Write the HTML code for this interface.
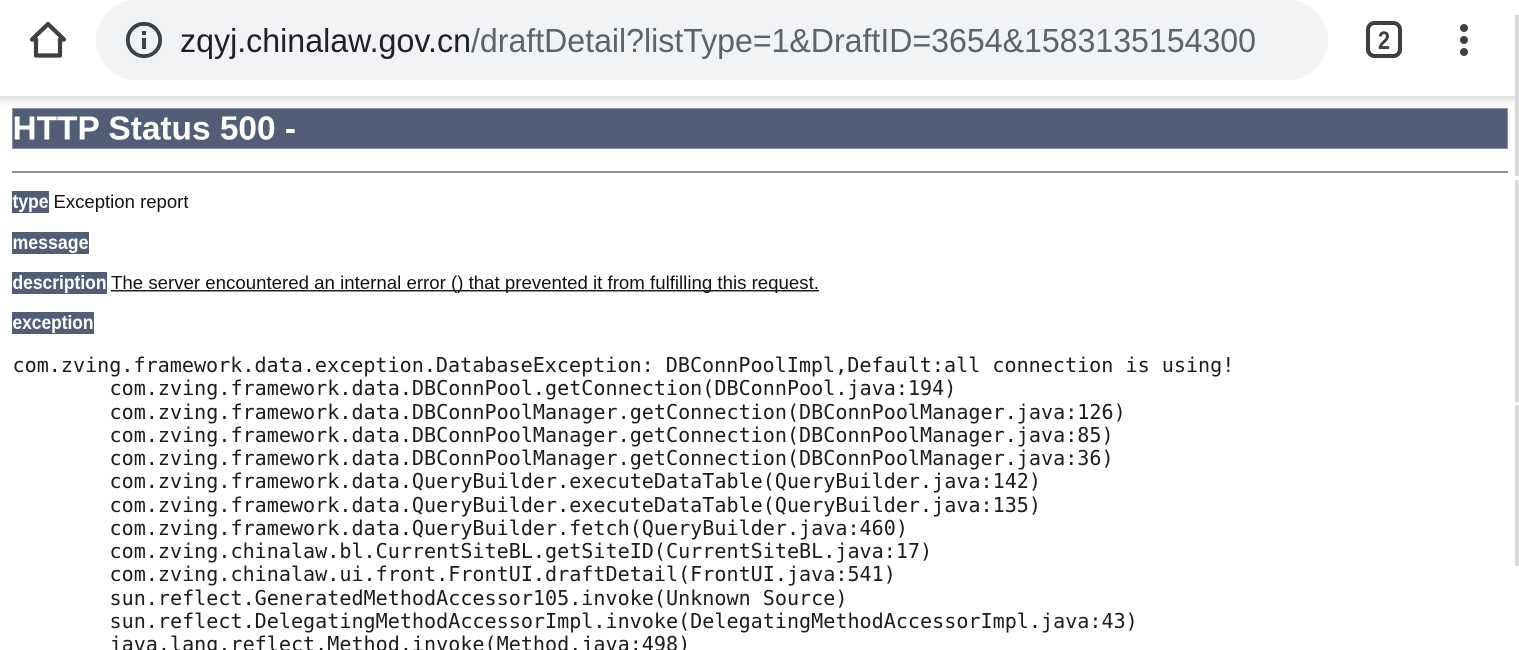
<!DOCTYPE html>
<html><head><meta charset="utf-8"><title>HTTP Status 500</title>
<style>
html,body{margin:0;padding:0;width:1519px;height:650px;overflow:hidden;background:#fff}
svg{display:block}
.s{font-family:"Liberation Sans",Arial,sans-serif}
.m{font-family:"DejaVu Sans Mono","Liberation Mono",monospace;font-size:20.1px;fill:#1c1c1c;white-space:pre}
.b{font-weight:700;fill:#fff;font-size:19.5px}
.t{font-size:18.5px;fill:#111}
</style></head><body>
<svg width="1519" height="650" viewBox="0 0 1519 650" xmlns="http://www.w3.org/2000/svg">
<defs><linearGradient id="sh" x1="0" y1="0" x2="0" y2="1"><stop offset="0" stop-color="#e2e2e2"/><stop offset="1" stop-color="#fff"/></linearGradient></defs>
<rect x="0" y="96" width="1519" height="10" fill="url(#sh)"/>
<!-- toolbar -->
<rect x="96" y="0" width="1232" height="80" rx="40" fill="#f1f3f4"/>
<path d="M48 24 L32 39.5 H36 V55.5 H60 V39.5 H64 Z" fill="none" stroke="#3c4043" stroke-width="4.2" stroke-linejoin="round"/>
<circle cx="144" cy="40" r="16.2" fill="none" stroke="#3c4043" stroke-width="3.8"/>
<rect x="142" y="31" width="4" height="4" fill="#3c4043"/><rect x="142" y="38" width="4" height="11" fill="#3c4043"/>
<text class="s" x="180" y="52" font-size="33.5" fill="#202124" textLength="291" lengthAdjust="spacingAndGlyphs">zqyj.chinalaw.gov.cn</text>
<text class="s" x="471" y="52" font-size="33.5" fill="#5f6368" textLength="785" lengthAdjust="spacingAndGlyphs">/draftDetail?listType=1&amp;DraftID=3654&amp;1583135154300</text>
<rect x="1368" y="23" width="32" height="33" rx="6.5" fill="none" stroke="#3c4043" stroke-width="4"/>
<text class="s" x="1384" y="49" font-size="25" font-weight="700" fill="#3c4043" text-anchor="middle" textLength="12" lengthAdjust="spacingAndGlyphs">2</text>
<circle cx="1464" cy="28" r="4" fill="#3c4043"/><circle cx="1464" cy="40" r="4" fill="#3c4043"/><circle cx="1464" cy="52" r="4" fill="#3c4043"/>
<!-- scrollbar -->
<rect x="1515" y="15" width="4" height="161" fill="#d9d9d9"/>
<rect x="1515" y="180" width="4" height="222" fill="#d9d9d9"/>
<rect x="1515" y="405" width="4" height="161" fill="#d9d9d9"/>
<!-- heading -->
<rect x="12.5" y="108.5" width="1495" height="40" fill="#525d76" stroke="#8a93a8" stroke-width="1"/>
<text class="s" x="12.5" y="139.5" font-size="33.5" font-weight="700" fill="#fff" textLength="283.5" lengthAdjust="spacingAndGlyphs">HTTP Status 500 -</text>
<rect x="12" y="171" width="1496" height="2" fill="#8f8f8f"/>
<!-- rows -->
<rect x="12" y="191" width="37" height="22" fill="#525d76"/>
<text class="s b" x="12.5" y="208" textLength="36" lengthAdjust="spacingAndGlyphs">type</text>
<text class="s t" x="53.5" y="208" textLength="135" lengthAdjust="spacingAndGlyphs">Exception report</text>
<rect x="12" y="232" width="77" height="22" fill="#525d76"/>
<text class="s b" x="12.5" y="249" textLength="76" lengthAdjust="spacingAndGlyphs">message</text>
<rect x="12" y="272" width="95" height="22" fill="#525d76"/>
<text class="s b" x="12.5" y="289" textLength="94" lengthAdjust="spacingAndGlyphs">description</text>
<text class="s t" x="111" y="289" textLength="708" lengthAdjust="spacingAndGlyphs">The server encountered an internal error () that prevented it from fulfilling this request.</text>
<rect x="111" y="290" width="708" height="1.5" fill="#222"/>
<rect x="12" y="312" width="82" height="22" fill="#525d76"/>
<text class="s b" x="12.5" y="329" textLength="81" lengthAdjust="spacingAndGlyphs">exception</text>
<!-- trace -->
<text class="m" x="12.5" y="372">com.zving.framework.data.exception.DatabaseException: DBConnPoolImpl,Default:all connection is using!</text>
<text class="m" x="109.5" y="395">com.zving.framework.data.DBConnPool.getConnection(DBConnPool.java:194)</text>
<text class="m" x="109.5" y="419">com.zving.framework.data.DBConnPoolManager.getConnection(DBConnPoolManager.java:126)</text>
<text class="m" x="109.5" y="442">com.zving.framework.data.DBConnPoolManager.getConnection(DBConnPoolManager.java:85)</text>
<text class="m" x="109.5" y="465">com.zving.framework.data.DBConnPoolManager.getConnection(DBConnPoolManager.java:36)</text>
<text class="m" x="109.5" y="488">com.zving.framework.data.QueryBuilder.executeDataTable(QueryBuilder.java:142)</text>
<text class="m" x="109.5" y="512">com.zving.framework.data.QueryBuilder.executeDataTable(QueryBuilder.java:135)</text>
<text class="m" x="109.5" y="535">com.zving.framework.data.QueryBuilder.fetch(QueryBuilder.java:460)</text>
<text class="m" x="109.5" y="558">com.zving.chinalaw.bl.CurrentSiteBL.getSiteID(CurrentSiteBL.java:17)</text>
<text class="m" x="109.5" y="581">com.zving.chinalaw.ui.front.FrontUI.draftDetail(FrontUI.java:541)</text>
<text class="m" x="109.5" y="605">sun.reflect.GeneratedMethodAccessor105.invoke(Unknown Source)</text>
<text class="m" x="109.5" y="628">sun.reflect.DelegatingMethodAccessorImpl.invoke(DelegatingMethodAccessorImpl.java:43)</text>
<text class="m" x="109.5" y="651">java.lang.reflect.Method.invoke(Method.java:498)</text>
</svg>
</body></html>
